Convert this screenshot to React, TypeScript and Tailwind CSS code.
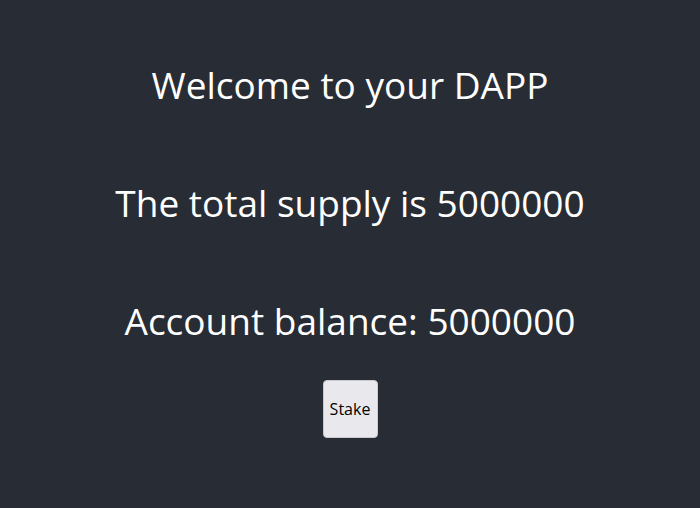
export default function App() {
  return (
    <div className="flex min-h-[508px] flex-col items-center bg-[#282c34] pt-[58px] text-white [font-family:'Open_Sans',sans-serif]">
      <h1 className="text-[37px] leading-[54px]">Welcome to your DAPP</h1>
      <h2 className="mt-[64px] text-[37px] leading-[54px]">The total supply is 5000000</h2>
      <h2 className="mt-[64px] text-[37px] leading-[54px]">Account balance: 5000000</h2>
      <button className="mt-[32px] flex h-[58px] w-[55px] items-center justify-center rounded-[4px] border border-[#c9c9cf] bg-[#e9e9ed] text-[16px] text-black">
        Stake
      </button>
    </div>
  );
}
